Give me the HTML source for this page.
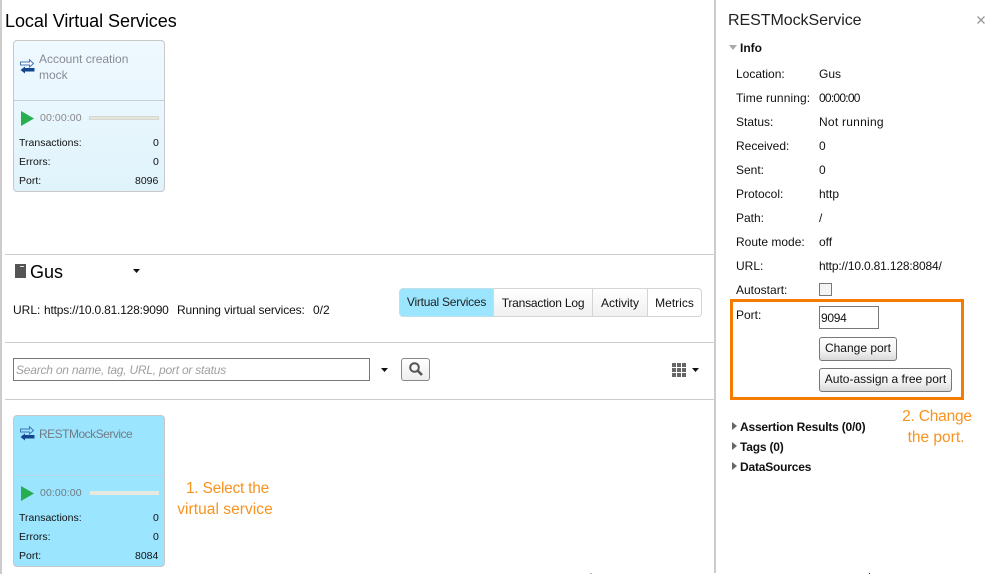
<!DOCTYPE html>
<html><head><meta charset="utf-8">
<style>
html,body{margin:0;padding:0;background:#fff}
#p{position:relative;width:992px;height:574px;overflow:hidden;background:#fff;font-family:"Liberation Sans",sans-serif;font-size:12px;color:#111}
.t{position:absolute;white-space:nowrap;line-height:14px}
.b{position:absolute;background:#ccc}
.card{position:absolute;left:13px;width:150px;height:150px;border:1px solid #c8c8c8;border-radius:4px}
.s{font-size:10.5px;line-height:12px}
.o{color:#f7931e;font-size:15.5px;line-height:21px;text-align:center}
.btn{position:absolute;box-sizing:border-box;border:1px solid #777;border-radius:3px;background:linear-gradient(#fff,#f2f2f2 60%,#d8d8d8);text-align:center;line-height:21px;height:24px;white-space:nowrap}
svg{position:absolute;overflow:visible}
.tab{position:absolute;top:288px;height:29px;box-sizing:border-box;line-height:28px;text-align:center;background:linear-gradient(#fff,#f0f0f0);border:1px solid #d4d4d4;border-left:0}
</style></head><body><div id="p">

<div class="b" style="left:0;top:0;width:2px;height:574px"></div>
<div class="b" style="left:714px;top:0;width:2px;height:573px"></div>
<div class="b" style="left:5px;top:254px;width:709px;height:1px"></div>
<div class="b" style="left:5px;top:342px;width:709px;height:1px"></div>
<div class="b" style="left:5px;top:399px;width:709px;height:1px"></div>

<div class="t" style="left:5px;top:10px;font-size:18px;line-height:22px;color:#000;letter-spacing:-0.05px">Local Virtual Services</div>

<!-- card 1 -->
<div class="card" style="top:40px;background:linear-gradient(#eff9ff,#e0f3fb)"></div>
<div class="b" style="left:14px;top:100px;width:150px;height:1px;background:#c4ced4"></div>
<svg style="left:20px;top:59px" width="15" height="15" viewBox="0 0 15 15"><path d="M0.5 3H9.5V0.8L13.5 4.5 9.5 8V6H0.5Z" fill="#fff" stroke="#3f74b8"/><path d="M14.5 9H5V7.5L0.5 11 5 14.5V12.5H14.5Z" fill="#14468f"/></svg>
<div class="t" style="left:39px;top:52px;color:#8a8a96">Account creation</div>
<div class="t" style="left:39px;top:68px;color:#8a8a96">mock</div>
<svg style="left:21px;top:111px" width="13" height="15"><path d="M0 0L13 7.5 0 15Z" fill="#27ae4f"/></svg>
<div class="t s" style="left:40px;top:112px;color:#888;letter-spacing:0.1px">00:00:00</div>
<div class="b" style="left:89px;top:116px;width:70px;height:4px;background:#e4e6de;border:0 solid #ccc;outline:1px solid #d8d8d2;outline-offset:-1px"></div>
<div class="t s" style="left:19px;top:137px">Transactions:</div><div class="t s" style="left:153px;top:137px">0</div>
<div class="t s" style="left:19px;top:156px">Errors:</div><div class="t s" style="left:153px;top:156px">0</div>
<div class="t s" style="left:19px;top:175px">Port:</div><div class="t s" style="left:135px;top:175px">8096</div>

<!-- Gus -->
<svg style="left:15px;top:264px" width="11" height="14"><rect width="11" height="14" fill="#555"/><rect x="5" y="2" width="4" height="1" fill="#ddd"/></svg>
<div class="t" style="left:30px;top:262px;font-size:18px;line-height:20px;color:#000">Gus</div>
<svg style="left:133px;top:269px" width="7" height="4"><path d="M0 0H7L3.5 4Z" fill="#111"/></svg>
<div class="t" style="left:13px;top:303px">URL:</div>
<div class="t" style="left:44px;top:303px;letter-spacing:-0.2px">https://10.0.81.128:9090</div>
<div class="t" style="left:177px;top:303px;letter-spacing:-0.12px">Running virtual services:</div>
<div class="t" style="left:313px;top:303px">0/2</div>

<!-- tabs -->
<div style="position:absolute;left:399px;top:288px;width:95px;height:29px;box-sizing:border-box;background:#9be5ff;border:1px solid #bfe0ea;border-radius:4px 0 0 4px;text-align:center;line-height:27px;color:#222;letter-spacing:-0.25px">Virtual Services</div>
<div class="tab" style="left:494px;width:99px;letter-spacing:-0.2px">Transaction Log</div>
<div class="tab" style="left:593px;width:55px">Activity</div>
<div class="tab" style="left:648px;width:54px;background:#fff;border-right:1px solid #d4d4d4;border-radius:0 4px 4px 0">Metrics</div>

<!-- search -->
<div style="position:absolute;left:13px;top:358px;width:355px;height:21px;border:1px solid #777;background:#fff"></div>
<div class="t" style="left:16px;top:363px;font-style:italic;color:#a0a0a0;letter-spacing:-0.22px">Search on name, tag, URL, port or status</div>
<svg style="left:381px;top:368px" width="7" height="4"><path d="M0 0H7L3.5 4Z" fill="#111"/></svg>
<div style="position:absolute;left:401px;top:358px;width:27px;height:21px;border:1px solid #888;border-radius:3px;background:linear-gradient(#fff,#eee)"></div>
<svg style="left:408px;top:361px" width="16" height="16" viewBox="0 0 16 16"><circle cx="6.5" cy="6.5" r="4.3" fill="none" stroke="#555" stroke-width="2"/><path d="M10 10L14 14" stroke="#555" stroke-width="2.6"/></svg>
<svg style="left:672px;top:363px" width="14" height="14" fill="#666"><rect width="4" height="4"/><rect x="5" width="4" height="4"/><rect x="10" width="4" height="4"/><rect y="5" width="4" height="4"/><rect x="5" y="5" width="4" height="4"/><rect x="10" y="5" width="4" height="4"/><rect y="10" width="4" height="4"/><rect x="5" y="10" width="4" height="4"/><rect x="10" y="10" width="4" height="4"/></svg>
<svg style="left:692px;top:368px" width="7" height="4"><path d="M0 0H7L3.5 4Z" fill="#111"/></svg>

<!-- card 2 -->
<div class="card" style="top:415px;background:#9be5ff"></div>
<div class="b" style="left:14px;top:475px;width:150px;height:1px;background:#b5d8e4"></div>
<svg style="left:20px;top:426px" width="15" height="15" viewBox="0 0 15 15"><path d="M0.5 3H9.5V0.8L13.5 4.5 9.5 8V6H0.5Z" fill="none" stroke="#3f74b8"/><path d="M14.5 9H5V7.5L0.5 11 5 14.5V12.5H14.5Z" fill="#14468f"/></svg>
<div class="t" style="left:39px;top:427px;color:#727b84;letter-spacing:-0.5px">RESTMockService</div>
<svg style="left:21px;top:486px" width="13" height="15"><path d="M0 0L13 7.5 0 15Z" fill="#27ae4f"/></svg>
<div class="t s" style="left:40px;top:487px;color:#6f7b82;letter-spacing:0.1px">00:00:00</div>
<div class="b" style="left:90px;top:491px;width:69px;height:4px;background:#e8e8e2"></div>
<div class="t s" style="left:19px;top:512px">Transactions:</div><div class="t s" style="left:153px;top:512px">0</div>
<div class="t s" style="left:19px;top:531px">Errors:</div><div class="t s" style="left:153px;top:531px">0</div>
<div class="t s" style="left:19px;top:550px">Port:</div><div class="t s" style="left:135px;top:550px">8084</div>

<div class="t o" style="left:165px;top:478px;width:120px"><span style="letter-spacing:-0.25px;margin-left:5px">1. Select the</span><br><span style="letter-spacing:0.05px">virtual service</span></div>

<!-- right panel -->
<div class="t" style="left:728px;top:11px;font-size:16px;line-height:20px;color:#222;letter-spacing:-0.05px">RESTMockService</div>
<svg style="left:977px;top:16px" width="8" height="8"><path d="M0.5 0.5L7.5 7.5M7.5 0.5L0.5 7.5" stroke="#999" stroke-width="1.3"/></svg>
<svg style="left:729px;top:45px" width="8" height="5"><path d="M0 0H8L4 5Z" fill="#aaa"/></svg>
<div class="t" style="left:740px;top:41px;font-weight:bold;color:#111">Info</div>

<div class="t" style="left:736px;top:67px">Location:</div><div class="t" style="left:819px;top:67px">Gus</div>
<div class="t" style="left:736px;top:91px;letter-spacing:0.1px">Time running:</div><div class="t" style="left:819px;top:91px;letter-spacing:-0.75px">00:00:00</div>
<div class="t" style="left:736px;top:115px">Status:</div><div class="t" style="left:819px;top:115px;letter-spacing:0.25px">Not running</div>
<div class="t" style="left:736px;top:139px">Received:</div><div class="t" style="left:819px;top:139px">0</div>
<div class="t" style="left:736px;top:163px">Sent:</div><div class="t" style="left:819px;top:163px">0</div>
<div class="t" style="left:736px;top:187px">Protocol:</div><div class="t" style="left:819px;top:187px">http</div>
<div class="t" style="left:736px;top:211px">Path:</div><div class="t" style="left:819px;top:211px">/</div>
<div class="t" style="left:736px;top:235px">Route mode:</div><div class="t" style="left:819px;top:235px">off</div>
<div class="t" style="left:736px;top:259px">URL:</div><div class="t" style="left:819px;top:259px;letter-spacing:-0.17px">http://10.0.81.128:8084/</div>
<div class="t" style="left:736px;top:283px">Autostart:</div>
<div style="position:absolute;left:819px;top:283px;width:11px;height:11px;border:1px solid #777;background:#f4f4f4"></div>

<div style="position:absolute;left:730px;top:299px;width:228px;height:95px;border:3px solid #f57c00"></div>
<div class="t" style="left:736px;top:308px">Port:</div>
<div style="position:absolute;left:819px;top:306px;width:58px;height:21px;border:1px solid #777;background:#fff"></div>
<div class="t" style="left:821px;top:311px;letter-spacing:-0.3px">9094</div>
<div class="btn" style="left:819px;top:337px;width:78px">Change port</div>
<div class="btn" style="left:819px;top:368px;width:133px">Auto-assign a free port</div>

<div class="t o" style="left:880px;top:406px;width:112px"><span style="margin-left:2px;letter-spacing:-0.2px">2. Change</span><br><span>the port.</span></div>

<svg style="left:732px;top:422px" width="5" height="8"><path d="M0 0L5 4 0 8Z" fill="#666"/></svg>
<div class="t" style="left:740px;top:420px;font-weight:bold;color:#111;letter-spacing:-0.2px">Assertion Results (0/0)</div>
<svg style="left:732px;top:442px" width="5" height="8"><path d="M0 0L5 4 0 8Z" fill="#666"/></svg>
<div class="t" style="left:740px;top:440px;font-weight:bold;color:#111;letter-spacing:-0.2px">Tags (0)</div>
<svg style="left:732px;top:462px" width="5" height="8"><path d="M0 0L5 4 0 8Z" fill="#666"/></svg>
<div class="t" style="left:740px;top:460px;font-weight:bold;color:#111;letter-spacing:-0.2px">DataSources</div>

<div class="b" style="left:590px;top:573px;width:2px;height:1px;background:#bbb"></div>
<div class="b" style="left:869px;top:573px;width:1px;height:1px;background:#333"></div>
</div></body></html>
